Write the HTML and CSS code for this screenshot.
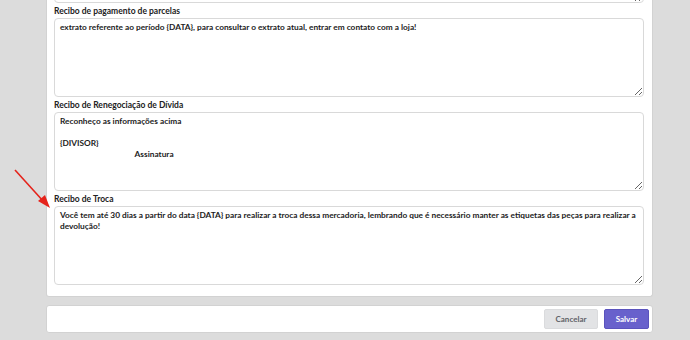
FILE: index.html
```html
<!DOCTYPE html>
<html lang="pt-BR">
<head>
  <meta charset="UTF-8" />
  <meta name="viewport" content="width=device-width, initial-scale=1.0" />
  <title>Recibos</title>
  <link rel="stylesheet" href="styles.css">
</head>
<body>
  <div class="page">
    <div class="card">
      <textarea class="field-input">Obrigado pela preferência!</textarea>

      <div class="field">
        <label class="field-label" for="parcelas">Recibo de pagamento de parcelas</label>
        <textarea class="field-input" id="parcelas">extrato referente ao período {DATA}, para consultar o extrato atual, entrar em contato com a loja!</textarea>
      </div>

      <div class="field">
        <label class="field-label" for="renegociacao">Recibo de Renegociação de Dívida</label>
        <textarea class="field-input" id="renegociacao">Reconheço as informações acima

{DIVISOR}
                                     Assinatura</textarea>
      </div>

      <div class="field">
        <label class="field-label" for="troca">Recibo de Troca</label>
        <textarea class="field-input" id="troca">Você tem até 30 dias a partir do data {DATA} para realizar a troca dessa mercadoria, lembrando que é necessário manter as etiquetas das peças para realizar a devolução!</textarea>
      </div>
    </div>

    <div class="footer">
      <button class="btn btn-cancel">Cancelar</button>
      <button class="btn btn-save">Salvar</button>
    </div>
  </div>

  <svg class="arrow" width="60" height="50" viewBox="0 0 60 50">
    <line x1="15" y1="10" x2="44" y2="42" stroke="#e5231b" stroke-width="1.6" />
    <polygon points="50,48 38,41 45,35" fill="#e5231b" />
  </svg>
</body>
</html>
```

FILE: styles.css
```css
body {
  margin: 0;
  background-color: #dcdcdc;
  font-family: 'Lato', sans-serif;
  overflow: hidden;
}

.page {
  margin-top: -76px;
  margin-left: 46px;
  width: 607px;
}

.card {
  background-color: #ffffff;
  border: 1px solid #d2d2d2;
  border-top: none;
  border-radius: 0 0 3px 3px;
  padding: 0 8px 11px 7px;
}

.field-label {
  display: block;
  padding-top: 3px;
  margin-bottom: 1px;
  line-height: 11px;
  font-size: 8.5px;
  font-weight: 700;
  color: #222222;
}

.field-input {
  display: block;
  box-sizing: border-box;
  width: 100%;
  height: 79px;
  margin: 0;
  padding: 3px 5px;
  border: 1px solid #d9d9d9;
  border-radius: 4px;
  font-family: 'Lato', sans-serif;
  font-size: 8.3px;
  font-weight: 700;
  line-height: 11px;
  color: #1c1c1c;
  background-color: #ffffff;
  resize: vertical;
  outline: none;
}

.footer {
  margin-top: 8px;
  background-color: #ffffff;
  border: 1px solid #d2d2d2;
  border-radius: 3px;
  padding: 3px 3px;
  display: flex;
  justify-content: flex-end;
  gap: 6px;
}

.btn {
  height: 20px;
  padding: 0 10px;
  border-radius: 2px;
  font-family: 'Lato', sans-serif;
  font-size: 8px;
  font-weight: 700;
  cursor: pointer;
}

.btn-cancel {
  width: 54px;
  background-color: #e2e3e5;
  border: 1px solid #dadbdd;
  color: #5f6268;
}

.btn-save {
  width: 45px;
  background-color: #6861cc;
  border: 1px solid #5a53bd;
  color: #ffffff;
}

.arrow {
  position: absolute;
  left: 0;
  top: 160px;
}
```
